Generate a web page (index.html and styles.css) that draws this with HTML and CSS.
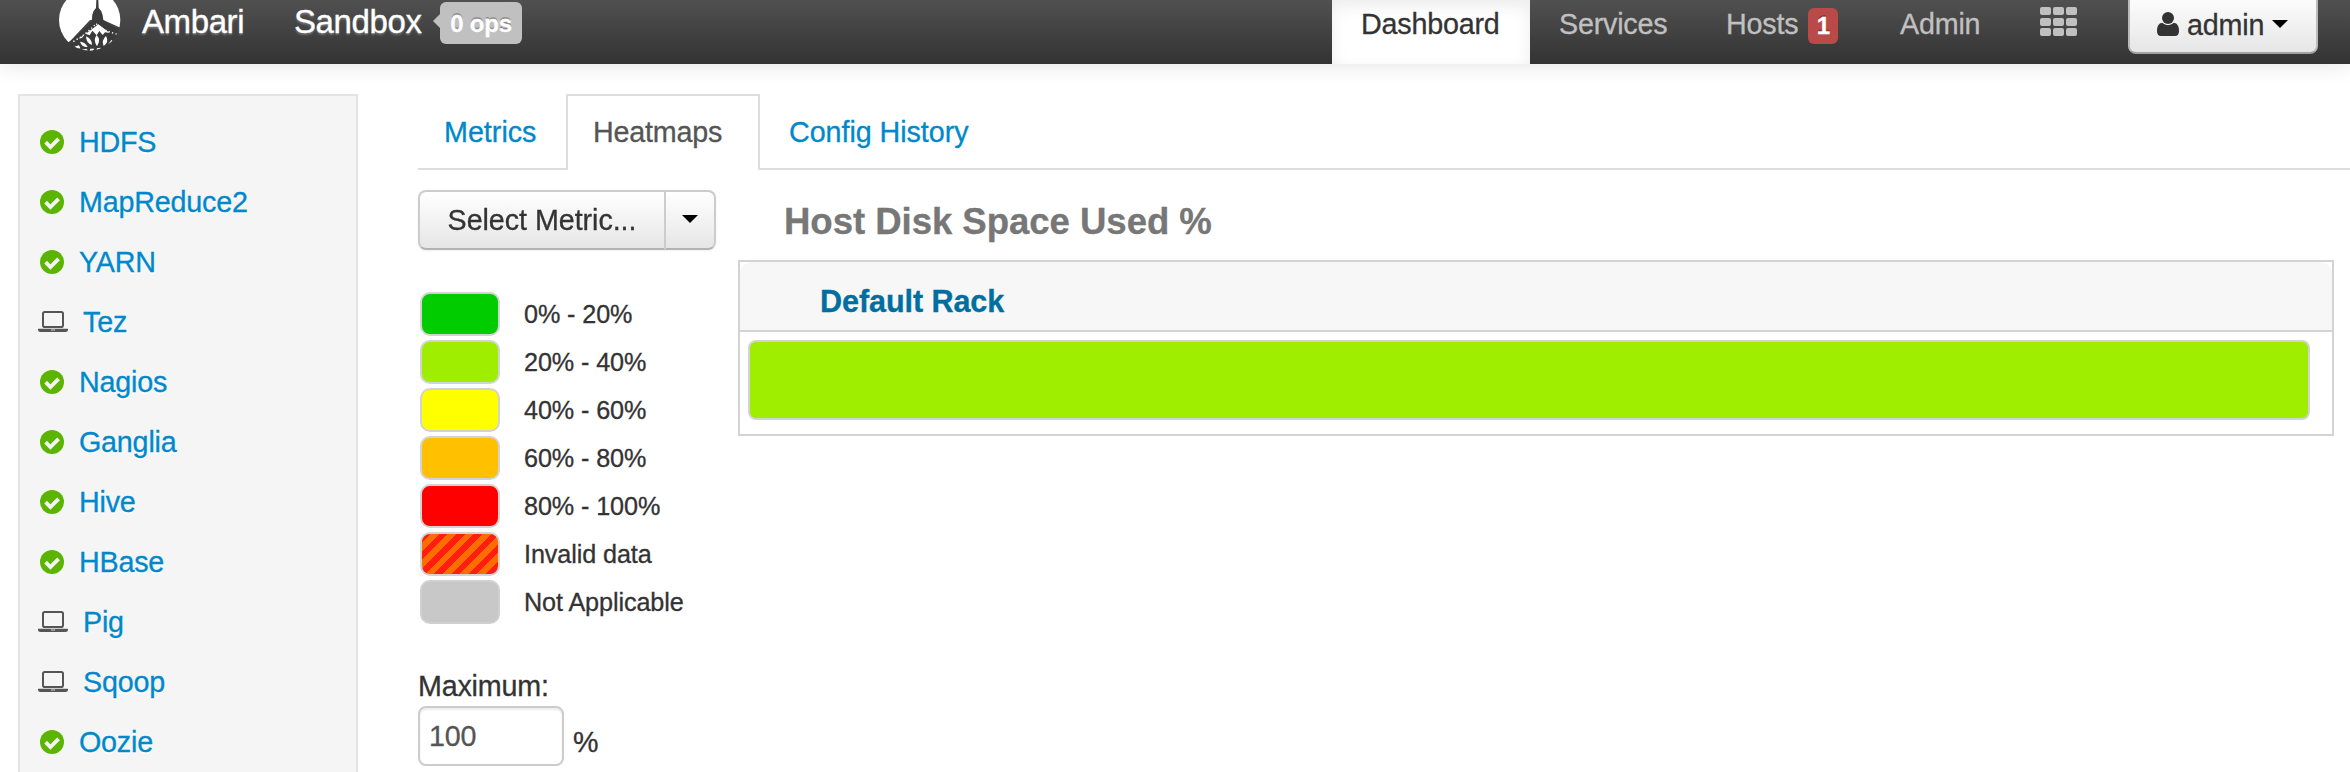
FILE: index.html
```
<!DOCTYPE html>
<html lang="en">
<head>
<meta charset="utf-8">
<title>Ambari - Sandbox</title>
<link rel="stylesheet" href="styles.css">
</head>
<body>
<svg class="defs" aria-hidden="true">
  <symbol id="ok" viewBox="0 0 24 24">
    <circle cx="12" cy="12" r="12" fill="#5ab400"/>
    <path d="M5.6 12.2 L10.4 17 L18.6 8.8" fill="none" stroke="#f5f5f5" stroke-width="3.8"/>
  </symbol>
  <symbol id="laptop" viewBox="0 0 30 21">
    <rect x="5" y="1" width="20" height="15" rx="1.8" fill="none" stroke="#555" stroke-width="2"/>
    <path d="M0 17.8h30v1.2q0 2-2.6 2H2.6Q0 21 0 19z" fill="#555"/>
    <path d="M13 19h4" stroke="#f5f5f5" stroke-width=".8"/>
  </symbol>
</svg>
<header class="navbar">
  <a class="brand">
    <svg class="logo" viewBox="0 0 240 180">
      <clipPath id="disc"><circle cx="119" cy="60" r="92"/></clipPath>
      <g clip-path="url(#disc)">
        <path d="M0 0h240v96L160 60h-40L58 126H0z" fill="#fff"/>
        <path d="M139 0h6l1 24q10 8 12 22l2 14q14 15 52 29v20L190 118l4 20-54 50-100-40 14-20Q104 92 125 64l2-20q2-12 11-20z" fill="#3b3b3b"/>
        <path d="M70 125Q112 100 138 71q24 22 64 32" fill="none" stroke="#fff" stroke-width="4" stroke-dasharray="4 7"/>
        <path d="M84 117Q122 92 145 73l34 26-14-2-7 8-10-12-8 13-13-14-8 14-13-5-10 13-14 2z" fill="#fff"/>
        <path d="M140 105q14 15 1 34-13-18-1-34zM108 109q18 8 18 26-18-6-18-26zM168 108q10 18-7 30-8-16 7-30zM90 125q16 1 23 16-18 1-23-16zM184 120l8 5-10 8-8 1zM73 140l14-4 4 9-12 3zM95 149l14-3 5 6h-16zM121 146l12 0-5 7h-9zM141 145l12-2-6 9h-8z" fill="#fff"/>
      </g>
    </svg>
    <span>Ambari</span>
  </a>
  <a class="cluster">Sandbox</a>
  <span class="ops">0 ops</span>
  <nav class="menu">
    <a class="active">Dashboard</a>
    <a class="services">Services</a>
    <a class="hosts">Hosts <span class="badge">1</span></a>
    <a class="adminlink">Admin</a>
    <svg class="grid" viewBox="0 0 37 29" fill="#c0c0c0">
      <rect width="11" height="8" rx="2"/><rect x="13" width="11" height="8" rx="2"/><rect x="26" width="11" height="8" rx="2"/>
      <rect y="11" width="11" height="8" rx="2"/><rect x="13" y="11" width="11" height="8" rx="2"/><rect x="26" y="11" width="11" height="8" rx="2"/>
      <rect y="21" width="11" height="8" rx="2"/><rect x="13" y="21" width="11" height="8" rx="2"/><rect x="26" y="21" width="11" height="8" rx="2"/>
    </svg>
  </nav>
  <button class="user">
    <svg class="person" viewBox="0 0 22 24" fill="#333">
      <circle cx="11" cy="6" r="6"/>
      <path d="M5 10.8Q11 15.6 17 10.8q5 .8 5 8.200Q22 24 18 24H4q-4 0-4-5 0-7.400 5-8.200z"/>
    </svg>
    <span>admin</span>
    <svg class="caret" viewBox="0 0 16 8"><path d="M0 0h16L8 8z"/></svg>
  </button>
</header>
<div class="page">
  <aside class="sidebar">
    <a><svg class="ok"><use href="#ok"/></svg><span>HDFS</span></a>
    <a><svg class="ok"><use href="#ok"/></svg><span>MapReduce2</span></a>
    <a><svg class="ok"><use href="#ok"/></svg><span>YARN</span></a>
    <a><svg class="laptop"><use href="#laptop"/></svg><span>Tez</span></a>
    <a><svg class="ok"><use href="#ok"/></svg><span>Nagios</span></a>
    <a><svg class="ok"><use href="#ok"/></svg><span>Ganglia</span></a>
    <a><svg class="ok"><use href="#ok"/></svg><span>Hive</span></a>
    <a><svg class="ok"><use href="#ok"/></svg><span>HBase</span></a>
    <a><svg class="laptop"><use href="#laptop"/></svg><span>Pig</span></a>
    <a><svg class="laptop"><use href="#laptop"/></svg><span>Sqoop</span></a>
    <a><svg class="ok"><use href="#ok"/></svg><span>Oozie</span></a>
  </aside>
  <main class="content">
    <div class="tabs">
      <a class="metrics">Metrics</a>
      <a class="current">Heatmaps</a>
      <a class="config">Config History</a>
    </div>
    <div class="columns">
      <section class="controls">
        <div class="select">
          <button class="choose">Select Metric...</button>
          <button class="toggle"><svg class="caret" viewBox="0 0 16 8"><path d="M0 0h16L8 8z"/></svg></button>
        </div>
        <ul class="legend">
          <li><i class="swatch green"></i>0% - 20%</li>
          <li><i class="swatch lime"></i>20% - 40%</li>
          <li><i class="swatch yellow"></i>40% - 60%</li>
          <li><i class="swatch orange"></i>60% - 80%</li>
          <li><i class="swatch red"></i>80% - 100%</li>
          <li><i class="swatch invalid"></i>Invalid data</li>
          <li><i class="swatch na"></i>Not Applicable</li>
        </ul>
        <div class="label">Maximum:</div>
        <div class="field"><input class="max" type="text" value="100"><span class="unit">%</span></div>
      </section>
      <section class="heatmap">
        <h4 class="title">Host Disk Space Used %</h4>
        <div class="rack">
          <div class="rack-name">Default Rack</div>
          <div class="hostbar"></div>
        </div>
      </section>
    </div>
  </main>
</div>
</body>
</html>
```
FILE: styles.css
```
* { box-sizing: border-box; }
body {
  margin: 0;
  height: 772px;
  overflow: hidden;
  background: #fff;
  color: #333;
  font: 28.7px/40px "Liberation Sans", Arial, sans-serif;
  letter-spacing: -.2px;
  -webkit-text-stroke: .3px;
}
button, input { font: inherit; letter-spacing: inherit; margin: 0; }
svg { display: block; flex: none; }
.defs { position: absolute; width: 0; height: 0; }

.navbar {
  display: flex;
  height: 64px;
  padding-right: 32px;
  background: linear-gradient(#505050, #333);
  box-shadow: 0 2px 20px rgba(0, 0, 0, .1);
  white-space: nowrap;
}
.brand, .cluster {
  color: #fff;
  font-size: 33px;
  letter-spacing: -.4px;
  line-height: 43px;
  text-shadow: 0 2px 2px rgba(255, 255, 255, .25);
}
.brand { display: flex; width: 294px; padding-left: 50px; }
.logo { width: 80px; height: 60px; margin-right: 12px; }
.cluster { width: 139px; }
.ops {
  position: relative;
  width: 82px;
  height: 42px;
  margin: 2px 0 0 7px;
  border-radius: 6px;
  background: #c0c0c0;
  color: #fff;
  font-size: 24px;
  font-weight: bold;
  line-height: 43px;
  text-align: center;
  text-shadow: 0 -2px 0 rgba(0, 0, 0, .25);
}
.ops::before {
  content: "";
  position: absolute;
  left: -7px;
  top: 11px;
  border: solid transparent;
  border-width: 8px 8px 8px 0;
  border-right-color: #c0c0c0;
}
.menu { display: flex; margin-left: auto; line-height: 49px; color: #c0c0c0; }
.menu .active {
  width: 198px;
  padding-left: 29px;
  background: #fff;
  color: #333;
  box-shadow: inset 0 6px 16px rgba(0, 0, 0, .08);
}
.services { width: 166px; padding-left: 29px; }
.hosts { display: flex; width: 174px; padding-left: 30px; }
.badge {
  width: 30px;
  height: 36px;
  margin: 8px 0 0 10px;
  border-radius: 6px;
  background: #b94a48;
  color: #fff;
  font-size: 24px;
  font-weight: bold;
  line-height: 36px;
  text-align: center;
  text-shadow: 0 -2px 0 rgba(0, 0, 0, .25);
}
.adminlink { width: 174px; padding-left: 30px; }
.grid { width: 37px; height: 29px; margin: 7px 51px 0 -4px; }
.user {
  display: flex;
  width: 190px;
  height: 64px;
  margin-top: -10px;
  padding: 20px 0 0 27px;
  border: 2px solid #bbb;
  border-bottom-color: #a2a2a2;
  border-radius: 8px;
  background: linear-gradient(#fff, #e6e6e6);
  color: #333;
  line-height: 30px;
}
.person { width: 22px; height: 24px; margin-right: 8px; }
.caret { width: 16px; height: 8px; }
.user .caret { margin: 8px 0 0 8px; }
.user span { line-height: 27px; }

.page { display: flex; gap: 60px; padding: 30px 0 0 18px; }
.sidebar {
  width: 340px;
  height: 710px;
  padding: 16px 0 0 18px;
  border: 2px solid #e3e3e3;
  background: #f5f5f5;
}
.sidebar a {
  display: flex;
  height: 60px;
  align-items: center;
  color: #08c;
  text-shadow: 0 2px 0 rgba(255, 255, 255, .8);
}
.sidebar .ok { width: 24px; height: 24px; margin: 0 15px 0 2px; }
.sidebar .laptop { width: 30px; height: 21px; margin: 0 15px 1px 0; }

.content { flex: 1; min-width: 0; }
.tabs {
  display: flex;
  height: 76px;
  border-bottom: 2px solid #ddd;
  color: #08c;
  line-height: 77px;
}
.metrics { width: 148px; padding-left: 26px; letter-spacing: 0; }
.current {
  width: 194px;
  height: 76px;
  padding-left: 25px;
  border: 2px solid #ddd;
  border-bottom: 0;
  background: #fff;
  color: #555;
  line-height: 73px;
}
.config { padding-left: 29px; letter-spacing: -.05px; }
.columns { display: flex; }
.controls { width: 320px; padding-top: 20px; }
.select { display: flex; width: 298px; height: 60px; filter: drop-shadow(0 1px 1px rgba(0, 0, 0, .06)); }
.choose, .toggle {
  height: 60px;
  padding: 0;
  border: 2px solid #ccc;
  border-bottom-color: #b3b3b3;
  background: linear-gradient(#fff, #e6e6e6);
  color: #333;
}
.choose { width: 248px; border-radius: 8px 0 0 8px; letter-spacing: -.05px; }
.toggle { width: 50px; padding: 0 0 2px 16px; border-left: 0; border-radius: 0 8px 8px 0; }
.legend { margin: 42px 0 0; padding: 0 0 0 2px; list-style: none; font-size: 25.2px; letter-spacing: -.1px; }
.legend li { display: flex; height: 48px; line-height: 44px; }
.swatch {
  width: 80px;
  height: 44px;
  margin-right: 24px;
  border: 2px solid #d3d3d3;
  border-radius: 10px;
}
.green { background: #00cc00; }
.lime { background: #9fee00; }
.yellow { background: #ffff00; }
.orange { background: #ffc000; }
.red { background: #ff0000; }
.invalid { background: repeating-linear-gradient(135deg, #ff1e10 0 6.100px, #ff6c00 6.100px 12.200px); }
.na { background: #c8c8c8; border-color: #d0d0d0; }
.label { height: 40px; margin-top: 38px; line-height: 41px; }
.field { display: flex; }
.max {
  width: 146px;
  height: 60px;
  padding: 1px 9px 0;
  border: 2px solid #ccc;
  border-radius: 8px;
  box-shadow: inset 0 2px 2px rgba(0, 0, 0, .075);
  color: #555;
}
.unit { padding: 16px 0 0 9px; }
.heatmap { width: 1596px; padding-top: 32px; }
.title {
  height: 58px;
  margin: 0;
  padding-left: 46px;
  color: #777;
  font-size: 36.6px;
  letter-spacing: -.05px;
}
.rack { height: 176px; border: 2px solid #d3d3d3; }
.rack-name {
  height: 70px;
  padding-left: 80px;
  border-bottom: 2px solid #d3d3d3;
  border-radius: 12px 12px 0 0;
  background: #f7f7f7;
  color: #006f9f;
  font-size: 30.6px;
  font-weight: bold;
  letter-spacing: -.1px;
  line-height: 78px;
}
.hostbar {
  width: 1562px;
  height: 80px;
  margin: 8px 0 0 8px;
  border: 2px solid #d3d3d3;
  border-radius: 8px;
  background: #9fee00;
}
```
